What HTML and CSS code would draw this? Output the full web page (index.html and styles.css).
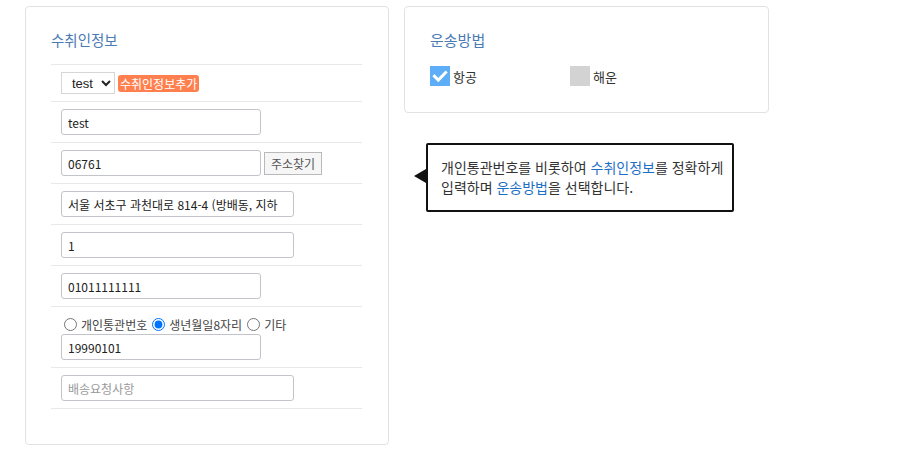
FILE: index.html
```html
<!DOCTYPE html>
<html lang="ko">
<head>
<meta charset="utf-8">
<link rel="stylesheet" href="styles.css">
</head>
<body>
<div class="page">
  <section class="card receiver">
    <h2 class="card-title">수취인정보</h2>
    <ul class="rows">
      <li class="row">
        <select class="sel"><option>test</option></select>
        <span class="badge">수취인정보추가</span>
      </li>
      <li class="row"><input class="inp w200" type="text" value="test"></li>
      <li class="row"><input class="inp w200" type="text" value="06761"><button class="btn">주소찾기</button></li>
      <li class="row"><input class="inp w233" type="text" value="서울 서초구 과천대로 814-4 (방배동, 지하"></li>
      <li class="row"><input class="inp w233" type="text" value="1"></li>
      <li class="row"><input class="inp w200" type="text" value="01011111111"></li>
      <li class="row">
        <div class="radios">
          <label class="radio"><input type="radio" name="idt">개인통관번호</label>
          <label class="radio"><input type="radio" name="idt" checked>생년월일8자리</label>
          <label class="radio"><input type="radio" name="idt">기타</label>
        </div>
        <input class="inp w200" type="text" value="19990101">
      </li>
      <li class="row"><input class="inp w233" type="text" placeholder="배송요청사항"></li>
    </ul>
  </section>
  <div class="side">
    <section class="card shipping">
      <h2 class="card-title">운송방법</h2>
      <div class="checks">
        <span class="check">
          <span class="box on"><svg viewBox="0 0 20 20" width="20" height="20"><path d="M4.5 10.2 L8.3 14 L15.6 6.6" fill="none" stroke="#fff" stroke-width="3" stroke-linecap="square"/></svg></span>
          <span class="check-label">항공</span>
        </span>
        <span class="check">
          <span class="box"></span>
          <span class="check-label">해운</span>
        </span>
      </div>
    </section>
    <div class="tip">
      <p>개인통관번호를 비롯하여 <b>수취인정보</b>를 정확하게<br>입력하며 <b>운송방법</b>을 선택합니다.</p>
    </div>
  </div>
</div>
</body>
</html>
```

FILE: styles.css
```css
* { box-sizing: border-box; }
html, body { margin: 0; padding: 0; background: #fff; }
body { font-family: "Noto Sans CJK KR", "Noto Sans", sans-serif; color: #333; }
.page { display: flex; align-items: flex-start; gap: 15px; padding: 6px 0 0 25px; }
.card { border: 1px solid #e2e2e2; border-radius: 4px; background: #fff; }
.receiver { width: 364px; padding: 21px 26px 35px 25px; }
.card-title { margin: 0; font-size: 15px; font-weight: 400; line-height: 24px; color: #4a7bb4; }
.receiver .card-title { font-size: 14.5px; }
.rows { list-style: none; margin: 12px 0 0; padding: 0; border-bottom: 1px solid #e8e8e8; }
.row { border-top: 1px solid #e8e8e8; padding: 7px 10px; display: flex; flex-wrap: wrap; align-items: center; }
.sel { height: 22px; width: 54px; border: 1px solid #d6d6d6; border-radius: 0; background: #fff; font-family: "Liberation Sans", Arial, sans-serif; font-size: 13px; color: #222; padding: 0 0 0 6px; }
.badge { margin-left: 3px; background: #ff7f4f; color: #fff; font-size: 12px; line-height: 17px; padding: 0 2px; border-radius: 3px; }
.inp { height: 26px; border: 1px solid #c3c3cb; border-radius: 3px; padding: 0 6px; font-family: "Noto Sans CJK KR", sans-serif; font-size: 12px; color: #222; background: #fff; outline: none; }
.inp::placeholder { color: #999; }
.w200 { width: 200px; }
.w233 { width: 233px; }
.btn { margin-left: 3px; height: 23px; padding: 0 6px; border: 1px solid #b9b9b9; border-radius: 0; background: #f6f6f6; font-family: "Noto Sans CJK KR", sans-serif; font-size: 12px; color: #555; }
.radios { width: 100%; display: flex; align-items: center; height: 20px; font-size: 12px; color: #444; }
.radio { display: inline-flex; align-items: center; margin-right: 2px; }
.radio input { margin: 0 4px 0 3px; width: 13px; height: 13px; }
.side { display: flex; flex-direction: column; }
.shipping { width: 365px; padding: 21px 26px 26px 25px; }
.checks { display: flex; margin-top: 14px; }
.check { display: inline-flex; align-items: center; width: 140px; }
.box { width: 20px; height: 20px; background: #d3d3d3; display: inline-block; }
.box.on { background: #5eadf7; }
.box svg { display: block; }
.check-label { margin-left: 3px; font-size: 13px; color: #333; }
.tip { position: relative; margin: 30px 0 0 22px; width: 308px; height: 69px; border: 2px solid #111; border-radius: 2px; padding: 12px 0 0 13px; }
.tip::before { content: ""; position: absolute; left: -14px; top: 24px; border-style: solid; border-width: 7px 12px 7px 0; border-color: transparent #111 transparent transparent; }
.tip p { margin: 0; font-size: 14px; line-height: 20px; color: #333; }
.tip b { font-weight: 400; color: #1d6fc4; }
```
